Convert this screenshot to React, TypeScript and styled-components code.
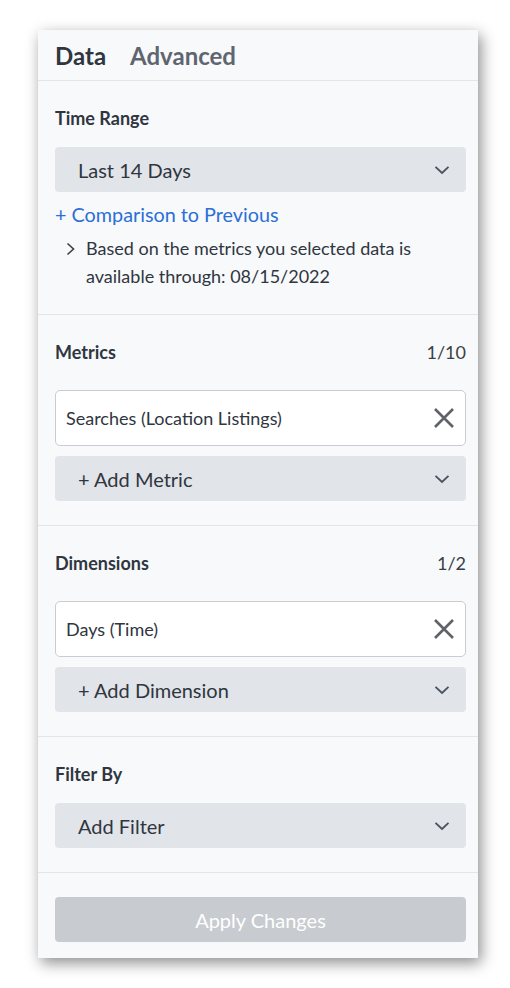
import styled, { createGlobalStyle } from 'styled-components';

const GlobalStyle = createGlobalStyle`
  html, body {
    margin: 0;
    padding: 0;
    background: #ffffff;
  }
  body {
    font-family: Lato, 'Open Sans', sans-serif;
    color: #2f3640;
  }
  * {
    box-sizing: border-box;
  }
`;

const Page = styled.div`
  padding: 30px 0 30px 38px;
`;

const Panel = styled.div`
  width: 440px;
  background: #f8f9fb;
  box-shadow: 3px 5px 14px rgba(0, 0, 0, 0.45);
`;

const Tabs = styled.div`
  height: 51px;
  display: flex;
  gap: 24px;
  padding: 12px 12px 0 17px;
  border-bottom: 1px solid #e2e5e9;
`;

const Tab = styled.div<{ $active?: boolean }>`
  font-size: 24px;
  line-height: 28px;
  font-weight: 700;
  color: ${(p) => (p.$active ? '#2f3640' : '#5f6570')};
`;

const Section = styled.div`
  padding: 25px 12px 24px 17px;
  border-bottom: 1px solid #e2e5e9;
`;

const SectionHead = styled.div<{ $mb: number }>`
  display: flex;
  justify-content: space-between;
  align-items: baseline;
  margin-bottom: ${(p) => p.$mb}px;
`;

const Label = styled.div`
  font-size: 18px;
  line-height: 24px;
  font-weight: 700;
  color: #2f3640;
`;

const Count = styled.div`
  font-size: 18px;
  line-height: 24px;
  color: #3a3f47;
`;

const Select = styled.div`
  height: 45px;
  display: flex;
  align-items: center;
  justify-content: space-between;
  padding: 0 16px 0 23px;
  background: #e1e4e8;
  border-radius: 4px;
  font-size: 20px;
  color: #2f3640;
`;

const Chip = styled.div`
  height: 56px;
  display: flex;
  align-items: center;
  justify-content: space-between;
  padding: 0 10px 0 10px;
  margin-bottom: 10px;
  background: #ffffff;
  border: 1px solid #c9cdd1;
  border-radius: 5px;
  font-size: 18px;
  color: #2f3640;
`;

const AddLink = styled.div`
  margin-top: 10px;
  font-size: 19.8px;
  line-height: 24px;
  color: #2b6fd6;
`;

const Info = styled.div`
  margin-top: 8px;
  display: flex;
  gap: 11px;
  padding-left: 11px;
  font-size: 18px;
  line-height: 28px;
  color: #2f3640;
  svg {
    flex: none;
    margin-top: 8px;
  }
`;

const Footer = styled.div`
  padding: 24px 12px 16px 17px;
`;

const ApplyButton = styled.div`
  height: 45px;
  display: flex;
  align-items: center;
  justify-content: center;
  background: #c8ccd0;
  border-radius: 4px;
  font-size: 20px;
  color: #ffffff;
`;

function ChevronDown() {
  return (
    <svg width='16' height='10' viewBox='0 0 16 10'>
      <path d='M1.5 1.8 L8 8 L14.5 1.8' fill='none' stroke='#4a5260' strokeWidth='1.8' />
    </svg>
  );
}

function ChevronRight() {
  return (
    <svg width='9' height='14' viewBox='0 0 9 14'>
      <path d='M1.5 1.5 L7.5 7 L1.5 12.5' fill='none' stroke='#3a3f47' strokeWidth='1.6' />
    </svg>
  );
}

function CloseIcon() {
  return (
    <svg width='22' height='22' viewBox='0 0 22 22'>
      <path d='M2 2 L20 20 M20 2 L2 20' fill='none' stroke='#5f6368' strokeWidth='2.6' />
    </svg>
  );
}

function App() {
  return (
    <>
      <GlobalStyle />
      <Page>
        <Panel>
          <Tabs>
            <Tab $active>Data</Tab>
            <Tab>Advanced</Tab>
          </Tabs>

          <Section>
            <SectionHead $mb={17}>
              <Label>Time Range</Label>
            </SectionHead>
            <Select>
              Last 14 Days
              <ChevronDown />
            </Select>
            <AddLink>+ Comparison to Previous</AddLink>
            <Info>
              <ChevronRight />
              <div>Based on the metrics you selected data is available through: 08/15/2022</div>
            </Info>
          </Section>

          <Section>
            <SectionHead $mb={26}>
              <Label>Metrics</Label>
              <Count>1/10</Count>
            </SectionHead>
            <Chip>
              Searches (Location Listings)
              <CloseIcon />
            </Chip>
            <Select>
              + Add Metric
              <ChevronDown />
            </Select>
          </Section>

          <Section>
            <SectionHead $mb={26}>
              <Label>Dimensions</Label>
              <Count>1/2</Count>
            </SectionHead>
            <Chip>
              Days (Time)
              <CloseIcon />
            </Chip>
            <Select>
              + Add Dimension
              <ChevronDown />
            </Select>
          </Section>

          <Section>
            <SectionHead $mb={17}>
              <Label>Filter By</Label>
            </SectionHead>
            <Select>
              Add Filter
              <ChevronDown />
            </Select>
          </Section>

          <Footer>
            <ApplyButton>Apply Changes</ApplyButton>
          </Footer>
        </Panel>
      </Page>
    </>
  );
}

export default App;
